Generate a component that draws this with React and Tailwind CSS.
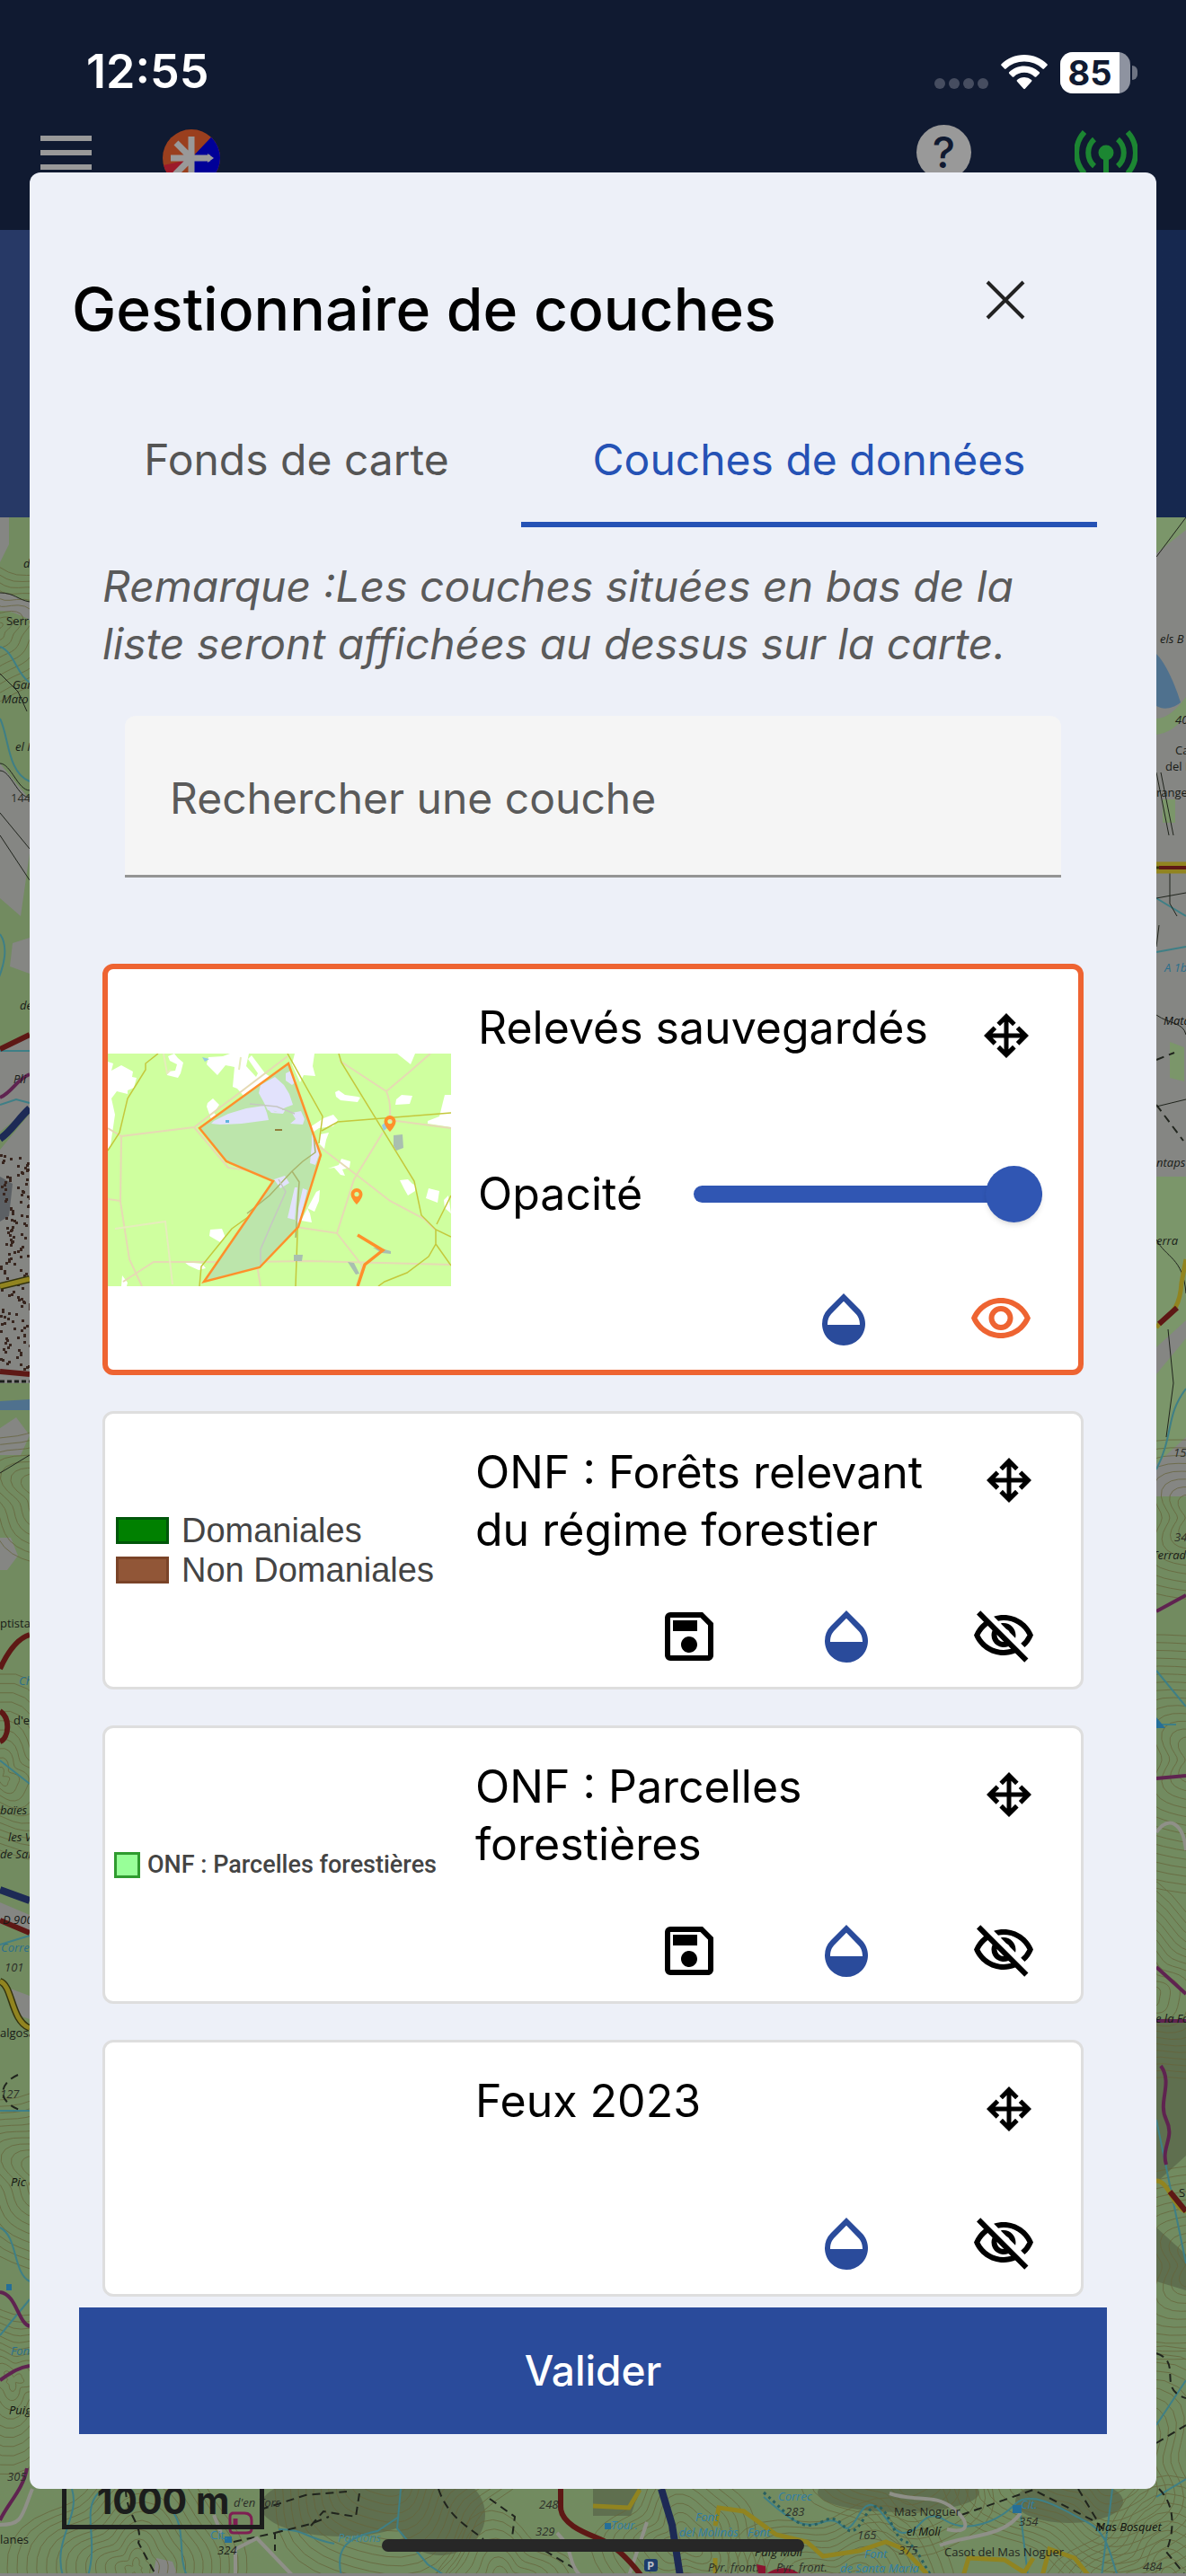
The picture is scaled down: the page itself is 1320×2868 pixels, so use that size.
// Layer manager - modal dialog shown over the map screen
import React, { useState } from 'react';
import {
  MdOutlineOpacity,
  MdOutlineSave,
  MdOutlineVisibility,
  MdOutlineVisibilityOff,
} from 'react-icons/md';

const INITIAL_LAYERS = [
  { id: 'releves', title: 'Relevés sauvegardés', legend: 'preview', visible: true, showOpacity: true },
  { id: 'forets', title: 'ONF : Forêts relevant du régime forestier', legend: 'forets', savable: true },
  { id: 'parcelles', title: 'ONF : Parcelles forestières', legend: 'parcelles', savable: true },
  { id: 'feux', title: 'Feux 2023' },
];

// ============================================================================
// ICONS
// ============================================================================
function MoveIcon() {
  return (
    <svg viewBox="0 -960 960 960" className="size-[60px]" fill="currentColor" aria-hidden="true">
      <path d="M480-80 310-250l57-57 73 73v-206H235l73 72-58 58L80-480l169-169 57 57-72 72h206v-206l-73 73-57-57 170-170 170 170-57 57-73-73v206h205l-73-72 58-58 170 170-170 170-57-57 73-73H520v205l72-73 58 58L480-80Z" />
    </svg>
  );
}

function CloseIcon() {
  return (
    <svg viewBox="0 0 60 60" className="size-[60px]" fill="none" stroke="#222" strokeWidth="4" aria-hidden="true">
      <path d="M10 10 50 50M50 10 10 50" />
    </svg>
  );
}

function WifiIcon() {
  return (
    <svg viewBox="0 0 52 40" className="h-10 w-[52px]" fill="#fff" aria-hidden="true">
      <path d="M26 0C16 0 7 4 .6 10.300a1.200 1.200 0 0 0 0 1.700l3.400 3.500a1.200 1.200 0 0 0 1.700 0C11 10.400 18.200 7.500 26 7.500s15 2.900 20.300 8a1.200 1.200 0 0 0 1.700 0l3.400-3.500a1.200 1.200 0 0 0 0-1.700C45 4 36 0 26 0Z" />
      <path d="M26 12.500c-6.500 0-12.400 2.500-16.800 6.700a1.200 1.200 0 0 0 0 1.700l3.500 3.500a1.200 1.200 0 0 0 1.700 0A16.800 16.800 0 0 1 26 19.800c4.500 0 8.500 1.700 11.600 4.600a1.200 1.200 0 0 0 1.700 0l3.500-3.500a1.200 1.200 0 0 0 0-1.700A24.200 24.200 0 0 0 26 12.500Z" />
      <path d="M26 25c-3.100 0-5.900 1.200-8 3.100a1.200 1.200 0 0 0 0 1.700l7.200 7.900a1.200 1.200 0 0 0 1.700 0l7.200-7.900a1.200 1.200 0 0 0 0-1.700A12 12 0 0 0 26 25Z" />
    </svg>
  );
}

function LogoIcon() {
  return (
    <svg viewBox="0 0 64 64" className="size-16" aria-hidden="true">
      <circle cx="32" cy="32" r="32" fill="#9a3f1e" />
      <path d="M54 8.800A32 32 0 0 1 32 64V32Z" fill="#000098" />
      <path d="M10 54A32 32 0 0 1 1 40L28 34Z" fill="#9c1a2a" />
      <g stroke="#999" strokeWidth="7" fill="none">
        <path d="M32 8v50M9 32h44M15 15l17 17-18 18" />
      </g>
      <path d="M50 27l7 5-7 5Z" fill="#999" />
    </svg>
  );
}

function SignalIcon() {
  return (
    <svg viewBox="0 0 70 64" className="h-16 w-[70px]" fill="none" stroke="#1c8632" strokeWidth="6" aria-hidden="true">
      <circle cx="35" cy="25" r="8.500" fill="#1c8632" stroke="none" />
      <path d="M35 25v39M22 10a20 20 0 0 0 0 30M48 10a20 20 0 0 1 0 30M11 2a34 34 0 0 0 0 46M59 2a34 34 0 0 1 0 46" />
    </svg>
  );
}

// ============================================================================
// MAP BACKDROP - topographic map, already dimmed by the modal
// ============================================================================
const HILLS = [
  { x: -10, y: 700, rings: 9 },
  { x: 60, y: 1660, rings: 9 },
  { x: 0, y: 1980, rings: 11 },
  { x: 60, y: 2420, rings: 12 },
  { x: 15, y: 2650, rings: 10 },
  { x: 150, y: 2860, rings: 13 },
  { x: 430, y: 2740, rings: 15 },
  { x: 560, y: 2880, rings: 8 },
  { x: 760, y: 2830, rings: 9 },
  { x: 940, y: 2890, rings: 12 },
  { x: 1010, y: 2750, rings: 10 },
  { x: 1230, y: 2750, rings: 15 },
  { x: 1300, y: 2880, rings: 12 },
  { x: 1340, y: 2520, rings: 12 },
  { x: 1270, y: 2220, rings: 13 },
  { x: 1340, y: 1960, rings: 16 },
  { x: 1340, y: 1690, rings: 10 },
];

// closed wavy ring used as a contour line
function contour(hill, ring) {
  const points = [];
  for (let i = 0; i < 48; i += 1) {
    const a = (i / 48) * Math.PI * 2;
    const r = 8 + ring * 9 + Math.sin(a * 3 + hill.x) * (3 + ring) + Math.cos(a * 5 + hill.y) * (2 + ring * 0.5);
    points.push(`${(hill.x + Math.cos(a) * r * 1.15).toFixed(1)} ${(hill.y + Math.sin(a) * r).toFixed(1)}`);
  }
  return `M${points.join('L')}Z`;
}

// scattered small blocks for the built-up area
const HOUSES = Array.from({ length: 150 }, (_, i) => ({
  x: Math.floor(Math.abs(Math.sin(i * 12.9) * 4375) % 34),
  y: Math.floor(1285 + i * 1.6),
}));

const MAP_LABELS = [
  [26, 632, 'd', '#191c18', true],
  [7, 696, 'Serre', '#191c18', false],
  [14, 767, 'Gar', '#191c18', true],
  [-8, 783, 'e Mato', '#191c18', true],
  [17, 836, 'el I', '#191c18', true],
  [12, 893, '144', '#2c2f29', false],
  [22, 1124, 'de', '#191c18', true],
  [15, 1206, 'Pli', '#191c18', true],
  [0, 1812, 'ptista', '#191c18', false],
  [21, 1876, 'Ch', '#2b6f8c', true],
  [15, 1920, "d'en", '#191c18', false],
  [0, 2020, 'baïes', '#191c18', true],
  [9, 2050, 'les V', '#191c18', true],
  [0, 2069, 'de Sar', '#191c18', true],
  [3, 2142, 'D 900', '#191c18', true],
  [1, 2173, 'Correc', '#2b6f8c', true],
  [5, 2195, '101', '#2c2f29', true],
  [0, 2268, 'algosa', '#191c18', false],
  [0, 2336, '127', '#2c2f29', true],
  [12, 2434, 'Pic d', '#10120f', true],
  [12, 2622, 'Font', '#2b6f8c', true],
  [10, 2688, 'Puig', '#10120f', true],
  [8, 2762, '305', '#2c2f29', true],
  [0, 2832, 'lanes', '#191c18', false],
  [1291, 716, 'els B', '#191c18', true],
  [1308, 806, '40', '#191c18', true],
  [1308, 840, 'Ca', '#191c18', false],
  [1297, 858, 'del P', '#191c18', false],
  [1287, 887, 'range', '#191c18', false],
  [1296, 1082, 'A 1b', '#2b6f8c', true],
  [1295, 1141, 'Mata', '#10120f', true],
  [1287, 1299, 'ntaps', '#191c18', true],
  [1287, 1386, 'erra', '#191c18', true],
  [1306, 1622, '152', '#2c2f29', true],
  [1307, 1716, '34', '#2c2f29', true],
  [1282, 1736, 'Terrad', '#191c18', true],
  [1286, 2252, 'e la Font', '#191c18', true],
  [1312, 2446, 'S', '#191c18', false],
  [260, 2791, "d'en Tors", '#2b2f29', true],
  [234, 2827, 'Cit.', '#2f7fa8', false],
  [242, 2844, '324', '#1c1f1b', true],
  [376, 2830, 'Partions', '#3f8697', true],
  [600, 2793, '248', '#2c2f29', true],
  [596, 2823, '329', '#2c2f29', true],
  [680, 2816, 'Tour.', '#2f7fa8', true],
  [774, 2807, 'Font', '#2f7fa8', true],
  [756, 2824, 'del Molinàs', '#2f7fa8', true],
  [832, 2824, 'Font', '#2f7fa8', true],
  [866, 2784, 'Correc', '#2f7fa8', true],
  [874, 2801, '283', '#2c2f29', true],
  [954, 2827, '165', '#2c2f29', true],
  [1000, 2844, '375', '#2c2f29', true],
  [995, 2801, 'Mas Noguer', '#23261f', false],
  [1009, 2823, 'el Molí', '#10120f', true],
  [1134, 2812, '354', '#2c2f29', true],
  [1136, 2793, 'Cit.', '#2f7fa8', true],
  [1219, 2818, 'Mas Bosquet', '#10120f', true],
  [1051, 2846, 'Casot del Mas Noguer', '#23261f', false],
  [962, 2848, 'Font', '#2f7fa8', true],
  [935, 2864, 'de Santa Maria', '#2f7fa8', true],
  [840, 2846, 'Puig Moll', '#10120f', true],
  [788, 2863, 'Pyr. front.', '#2c2f29', true],
  [864, 2863, 'Pyr. front.', '#2c2f29', true],
  [1272, 2862, '484', '#2c2f29', true],
];

function MapBackdrop() {
  return (
    <svg
      viewBox="0 576 1320 2292"
      preserveAspectRatio="xMidYMid slice"
      className="size-full"
      fill="none"
      aria-hidden="true"
    >
      <rect y="576" width="1320" height="2292" fill="#728b60" />

      {/* bare ground and shaded relief */}
      <g fill="#858683">
        <path d="M0 576h10v30l-10 20ZM0 660c16 0 20 8 33 10v20c-12-6-20-10-33-10ZM0 850l33 40v60l-10 70-23-20ZM0 1280l33-40v300H0ZM14 1050l19-6v40l-22-8ZM0 1170l33-16v80L0 1260ZM0 1590l18-12 15 20-10 22H0ZM0 1712h12l8 20-12 16H0ZM0 2118l33 14v18L0 2142ZM6 2212l27 10v26l-18-6ZM170 2868l4-20 18 4 6 16Z" />
        <path d="M1287 576h33v1090h-33Z" />
      </g>
      <g fill="#7b966a">
        <path d="M1287 576h33v14l-33 26ZM1287 800c12 0 22-10 33-24v20c-10 14-20 20-33 22ZM1294 890h14v26h-14ZM1302 1160l16 6v38l-16-4ZM1287 1310h33v160l-33 30ZM1287 1530l33-40v110l-33 30Z" />
      </g>
      <g fill="#545d45" opacity=".6">
        <ellipse cx="380" cy="2790" rx="90" ry="34" />
        <ellipse cx="490" cy="2800" rx="50" ry="45" />
        <ellipse cx="1000" cy="2775" rx="90" ry="22" />
        <ellipse cx="1190" cy="2785" rx="60" ry="24" />
        <path d="M1287 2250h33v150l-33 30ZM1287 2480l33 30v40l-33-10Z" />
        <path d="M660 2771h52l-10 30h-42Z" />
      </g>

      {/* contour lines */}
      <g stroke="#67643b" strokeWidth="1" opacity=".75">
        {HILLS.map((hill) =>
          Array.from({ length: hill.rings }, (_, ring) => (
            <path key={`${hill.x}-${hill.y}-${ring}`} d={contour(hill, ring)} />
          ))
        )}
      </g>

      {/* built-up area */}
      <path d="M0 1310l14 8-4 36-10 6Z" fill="#5c6064" />
      <g fill="#38261f">
        {HOUSES.map((h) => (
          <rect key={h.y} x={h.x} y={h.y} width="3" height="3" />
        ))}
      </g>

      {/* water */}
      <path d="M1287 728c10 10 20 32 27 54-10 8-20 8-27 4Z" fill="#4f718e" />
      <path d="M0 1560l33-2v12H0Z" fill="#4f718e" />
      <g stroke="#3e7f86" strokeWidth="2">
        <path d="M0 720c16 6 18 30 33 40M0 800c10 20 8 60 33 70M0 1040c10 14 4 36-2 50M0 1170h33M0 1230l18-6 15 4M0 1960l33 26M0 2165l33-10M0 2350h33M0 2480c20 10 14 50 33 60M33 2560L0 2600" />
        <path d="M1287 1000l33 20M1287 1060l33-6M1287 1636c20-40 10-60 33-90M1287 1860l33 40M1287 1920h22M1287 2360l33 160M1287 2700l33-50M1287 2780l33-20" />
        <path d="M70 2868c-12-40 20-66 10-97M110 2775c-20 20 0 50-12 93M186 2790c24 20 10 52 22 78M446 2771l-4 44 34 40 20 13M380 2868c-6-26 0-42 40-50l24-16M310 2816c30 0 30 10 62 16" />
        <path d="M850 2780c24 20 40 38 66 28s20 26 40-8 30 20 50 20 20-30 46-14 60 0 78-18 56 8 80 20 26 40 34 60M1238 2771l-12 97M1136 2800l8 68" />
      </g>
      <path d="M850 2775c30 26 40 46 66 32s24 34 46-4 30 22 44 26 20 24 30 38" stroke="#285f60" strokeWidth="3" strokeDasharray="3 4" />

      {/* paths */}
      <g stroke="#20241d" strokeWidth="2" strokeDasharray="9 6">
        <path d="M290 2794l50-16 46-4M306 2820l40-10 20-8M140 2771c0 30 20 40 14 60l20 37M346 2812l14-16 36 6 4-26M260 2830l46-10v20M488 2771c10 30 30 40 50 56M545 2782l28 20-4 30M640 2860l-50-30" />
        <path d="M1070 2800l80-28 70 36 12 12M1290 2771c20 20 16 50 8 70l22 27M1200 2771l24 40M20 2310c-22 10-24 30 4 40M1287 2620c30 10 0 40 33 50M1287 2720l33-20M1287 1230l30 40M1287 1180l20-8" />
      </g>
      <g stroke="#20241d" strokeWidth="1">
        <path d="M0 660c16 0 20 8 33 10M0 930l33 50M0 750l20 20 10 22M0 1640l33-20M1287 620l33-44M1287 1000l33-6M1302 960v46l8 14M1290 1030l-3 24M1287 1130c14 10 30 8 33 22M1287 1232l33-8M1300 1480l6 60-8 60M1287 1380c10 20 30 20 33 60" />
        <path d="M0 850c12 0 20 30 33 30M0 858c12 0 20 30 33 30M0 905l33 40M1287 860l14 70M1292 860l14 70" />
      </g>
      <g stroke="#8f9088" strokeWidth="4">
        <path d="M262 2868v-30l24-12 40 42M238 2800l8 20M990 2776c30 10 50 0 70 16s20 30-6 24M1046 2834c30-12 70-8 90-36M36 2771c-12 30-10 40-36 40M620 2820c20 20 10 30 26 48M700 2868l20-60M1287 2040c14-20 30-10 33 20" />
      </g>

      {/* secondary trails */}
      <g stroke="#5f2350" strokeWidth="4">
        <path d="M0 1222c14-6 18-20 33-26M0 2552c18 2 20 34 33 38M0 2650c12-8 20-14 33-16M30 2748c-4 24-22 40-30 58M1287 1794l33-18M1287 1980l33-3M1287 2190l33 30M1287 2250h33M1292 2300c14 20-4 40 6 60s-6 30 0 50" />
      </g>
      <path d="M258 2798h14q8 0 8 8v10q0 4-6 4h-14q-4 0-4-4v-14q0-4 4-4Z" stroke="#7e1f52" strokeWidth="3" />
      <path d="M262 2804v8" stroke="#7e1f52" strokeWidth="5" />

      {/* main roads */}
      <g stroke="#33330f" strokeWidth="8">
        <path d="M0 1432l33-8M0 2206c14 4 12 44 33 52M1287 966h33" />
      </g>
      <g stroke="#918420" strokeWidth="5">
        <path d="M0 1432l33-8M0 2206c14 4 12 44 33 52M1287 962h33M1287 970h33M1287 1478c10-14 26-14 28-50l5-26M1287 2428c14 0 18 30 33 34" />
        <path d="M796 2812l4-20 28 4 36 26 34 8 18 16 40-6 30-10 20 8 26 28M660 2790l40 2 12-20M1072 2868l6-20 40 2 22 14 10-16M1160 2868l8-30 28 10 16 20M796 2868v-20" />
      </g>
      <g stroke="#5e1815" strokeWidth="6">
        <path d="M0 1168l33-16M0 1527l33 3M0 1858c10-22 20-34 33-38M0 1905c12 8 10 30 0 34M0 2138l33 14M1290 1474l20-18M1302 2440l18 22" />
        <path d="M624 2771v20c0 20 30 30 44 36s30 20 46 41" />
      </g>
      <path d="M1290 966h30" stroke="#5e1815" strokeWidth="4" />
      <path d="M0 1538h33" stroke="#1c1f1b" strokeWidth="3" strokeDasharray="5 3" />
      <g stroke="#1d2a55" strokeWidth="8">
        <path d="M0 1268c12-8 20-22 33-34M0 2104l33 12M736 2771l12 40 9 57" />
      </g>

      {/* points of interest */}
      <g fill="#256f98">
        <rect x="250" y="2824" width="8" height="7" />
        <rect x="673" y="2809" width="7" height="7" />
        <rect x="1127" y="2789" width="10" height="9" />
        <rect x="7" y="2543" width="6" height="7" />
        <path d="M1287 1912l10 12h-10Z" />
      </g>
      <path d="M842 2855l10 2v9h-8ZM852 2866c14-10 30-8 38 0Z" fill="#8a1430" />
      <rect x="717" y="2849" width="15" height="14" rx="3" fill="#1d3c6b" />
      <text x="720" y="2861" fontSize="13" fontWeight="700" fill="#b8bcc4" fontFamily="Open Sans, sans-serif">P</text>

      <g fontFamily="Open Sans, sans-serif" fontSize="13" fontWeight="500">
        {MAP_LABELS.map(([x, y, text, color, italic]) => (
          <text key={`${x}-${y}`} x={x} y={y} fill={color} fontStyle={italic ? 'italic' : 'normal'}>
            {text}
          </text>
        ))}
      </g>
      <rect y="2865" width="1320" height="3" fill="#858585" />
    </svg>
  );
}

// ============================================================================
// SCREEN BEHIND THE DIALOG
// ============================================================================
function StatusBar() {
  return (
    <div className="flex h-[104px] items-end justify-between pr-[54px] pl-24">
      <span className="text-[52px] leading-[48px] font-semibold text-white">12:55</span>
      <div className="flex items-center">
        <div className="mr-3.5 flex gap-1 pt-6">
          <span className="h-3 w-3 rounded-full bg-[#464d60]" />
          <span className="h-3 w-3 rounded-full bg-[#464d60]" />
          <span className="h-3 w-3 rounded-full bg-[#464d60]" />
          <span className="h-3 w-3 rounded-full bg-[#464d60]" />
        </div>
        <WifiIcon />
        <div className="ml-3.5 flex h-[46px] w-[78px] items-center overflow-hidden rounded-[14px] bg-[#8e93a0]">
          <span className="flex h-full w-[66px] items-center justify-center bg-white text-[38px] leading-none font-bold text-[#101a31]">
            85
          </span>
        </div>
        <span className="ml-0.5 h-4 w-1.5 rounded-r-full bg-[#6d7382]" />
      </div>
    </div>
  );
}

function Toolbar() {
  return (
    <div className="flex h-[152px] items-start pt-[35px] pr-[54px] pl-[45px]">
      <button type="button" aria-label="Menu" className="mt-3 flex w-[57px] flex-col gap-2.5">
        <span className="h-1.5 w-full bg-[#999]" />
        <span className="h-1.5 w-full bg-[#999]" />
        <span className="h-1.5 w-full bg-[#999]" />
      </button>
      <div className="mt-[5px] ml-[79px]">
        <LogoIcon />
      </div>
      <button
        type="button"
        className="ml-auto flex size-[61px] items-center justify-center rounded-full bg-[#999] text-[48px] leading-none font-medium text-[#101a31]"
      >
        ?
      </button>
      <div className="mt-1.5 ml-[115px]">
        <SignalIcon />
      </div>
    </div>
  );
}

function Backdrop() {
  return (
    <div className="absolute inset-0 flex flex-col">
      <div className="bg-[#101a31]">
        <StatusBar />
        <Toolbar />
      </div>
      <div className="h-80 bg-linear-to-r from-[#273966] from-5% to-[#16284f] to-95%" />
      <div className="relative min-h-0 flex-1">
        <MapBackdrop />
        <div className="absolute bottom-[52px] left-[69px] h-[72px] w-[225px] border-5 border-t-0 border-[#1b1d1c] pt-4 text-center text-[41px] leading-12 font-bold text-[#1b1d1c]">
          1000 m
        </div>
        <div className="absolute inset-x-0 bottom-[27px] mx-auto h-3.5 w-[470px] rounded-full bg-[#272727]" />
      </div>
    </div>
  );
}

// ============================================================================
// LAYER LEGENDS
// ============================================================================
function PreviewLegend() {
  return (
    <svg viewBox="0 0 382 259" className="w-full" fill="none" role="img" aria-label="Aperçu des relevés">
      <rect width="382" height="259" fill="#cfff9f" />
      <g fill="#fff">
        <path d="M0 9l6 2-2 8 11-6 13 7-1 6 5 1-3 11-7 3v4l-12-3-6 8 4 18-5 34-3 4Z" />
        <path d="M67 3l7-3 4 5 6 5-3 12-3 5-12-3v-4l9-1 2-7-8-4ZM110 12l2-8 16-1 8-3h21l-3 14 11 12 2-4-11-16 4-4 15 20 6 4-29 22-8-9-5-2 2-22-10-2-9 11Z" />
        <path d="M208 0h22l-2 14 3 11-13-1-4 8-9-20ZM322 0h20l-5 12-10-8ZM111 55l6-5 7 7-6 9 3 3-6 4-5-14Z" />
        <path d="M253 43l4-2 7 5 14 2 3 1-3 5-19-2-5-4ZM321 51l6-5 12 1-3 9-16 1ZM375 46h7v36l-26-4v-3l13-5ZM240 72l11-4 5 6-5 7-16 2-9 6-1-7ZM236 90l10-2-3 8-2 10-6-6ZM245 128l12-4 3-7 10 3-1 7-8 2 3 7-5-1-7-8-7 1ZM325 141l9-1 5 5 4 2-1 6-8 5-4-7ZM357 150l12 3-2 13-13-5ZM374 163l5-5 3 20-7-6ZM232 154l4-2-1 12-5 12-8-4 3 6 2 10-12-2ZM114 196l13-1 4 10-6 5-12-7ZM85 232l20 2 4 5-8 2-11-5ZM16 247l6 8-1 4h-6Z" />
      </g>
      <g stroke="#e6dab4" strokeWidth="2">
        <path d="M200 3L96 82 15 92 14 165l10 64 14 30M0 83l15 9M0 162l14 2M96 82l38 45 52 7 12 22-16 34-16 45 4 24M258 8l52 34 25-21 24-21M310 42c8 20 2 30 4 32l68 9M306 88l-32 52-19 60-66-10M255 200l28 36-4 23M236 104l42 32 36 28 38 20 12 12M17 254l34-22h100l74-1 157 4" />
        <path d="M8 195l56-8 8 70M62 0l4 22 4-4M148 4l-2 14" stroke="#e6ecbc" />
      </g>
      <g stroke="#c4c83c" strokeWidth="1.500">
        <path d="M56 0L42 11v7L22 50l-9 38-13 20M200 0l39 70-4 30M257 0l3 10 81 132 8 38 16 16 17 8M238 86l18-10 126-10M365 196v16l-8 14-24 18-25 10-7 5M382 158l-16 32M365 212l17 24M102 259l2-22 34-42 50-36 25-24 18-14M205 131l8 12-4 116" />
      </g>
      <g fill="#a9bfb0">
        <path d="M318 91l10-1 1 15-8 3-3-5ZM207 224h10l-1 7h-9ZM267 232l7 1 6 12-4 1ZM295 216l10 1 10 3v3l-10-1Z" />
      </g>
      <path d="M105 4l8 2-5 3ZM305 80l4-4 3 6-5 4Z" fill="#94cbe4" />

      <path d="M201 11 102 83l30 37 52 22-77 112 62-16 43-45 25-80Z" fill="#bce5ab" />
      <g fill="#e2e2fc">
        <path d="M170 35l16-9 10 9 6 10 4 12-8 3-4 2v5l-8-3-8-1-5-10-5-9ZM118 75l16-8 20-6 20-3 3 8 2 8-30 4-24 1-10-1ZM198 22l6-3 6 12-5 4-7-5ZM178 62l10 3 10-3-3 5-13-1ZM205 66l10-2 4 9-2 6-14-1 6-5ZM227 90l5 10 4 10-5 14-6-2 2-20ZM185 140l12-4 5 8-10 6ZM208 149h3l-3 36-8-2ZM217 150l5 2-9 38-4-4Z" />
      </g>
      <g stroke="#a9b56c" strokeWidth="1.500">
        <path d="M155 178l25-20 25-27 12-11 14-10-2-20M205 131l8 12-4 62" />
        <path d="M182 190l-12 28v20M182 190l16-36-8-14M158 56l30 3 20 8" stroke="#c6c7c2" />
      </g>
      <path d="M131 74h4v3h-4Z" fill="#5fb4de" />
      <path d="M186 85h8" stroke="#927f3c" strokeWidth="2" />
      <path d="M201 11 102 83l30 37 52 22-77 112 62-16 43-45 25-80Z" stroke="#ff902b" strokeWidth="2.500" />
      <path d="M278 202l28 17-20 16-8 24" stroke="#ff902b" strokeWidth="3.500" />
      <g fill="#ff902b" fillRule="evenodd">
        <path id="pin" d="M314 69a6.500 6.500 0 0 0-6.500 6.500c0 5 6.500 11.500 6.500 11.500s6.500-6.500 6.500-11.500A6.500 6.500 0 0 0 314 69Zm0 4a2.600 2.600 0 1 1 0 5.200 2.600 2.600 0 0 1 0-5.200Z" />
        <use href="#pin" x="-37" y="81" />
      </g>
    </svg>
  );
}

function ForetsLegend() {
  return (
    <ul className="flex w-full flex-col gap-3 pl-3 font-['Liberation_Sans'] text-[38px] leading-8 text-[#444]">
      <li className="flex items-center gap-3.5">
        <span className="h-[30px] w-[59px] border-3 border-[#00560a] bg-[#008000]" />
        Domaniales
      </li>
      <li className="flex items-center gap-3.5">
        <span className="h-[30px] w-[59px] border-3 border-[#7a4328] bg-[#915637]" />
        Non Domaniales
      </li>
    </ul>
  );
}

function ParcellesLegend() {
  return (
    <div className="flex w-full items-center gap-2 pl-2.5 font-[Roboto] text-[27px] leading-8 font-medium whitespace-nowrap text-[#444]">
      <span className="size-[29px] shrink-0 border-3 border-[#2f9b2f] bg-[#98ff98]" />
      ONF : Parcelles forestières
    </div>
  );
}

// ============================================================================
// LAYER CARD
// ============================================================================
function LayerCard({ layer, onToggle }) {
  const [opacity, setOpacity] = useState(100);
  const EyeIcon = layer.visible ? MdOutlineVisibility : MdOutlineVisibilityOff;

  return (
    <li
      className={`flex rounded-xl bg-white ${
        layer.visible ? 'border-6 border-[#ee6432]' : 'border-3 border-[#dedede]'
      } ${layer.savable ? 'min-h-[310px]' : 'min-h-[286px]'}`}
    >
      <div className="flex w-[382px] shrink-0 items-center">
        {layer.legend === 'preview' && <PreviewLegend />}
        {layer.legend === 'forets' && <ForetsLegend />}
        {layer.legend === 'parcelles' && <ParcellesLegend />}
      </div>

      <div className="flex min-w-0 flex-1 flex-col pt-[33px] pr-[50px] pb-5 pl-[30px]">
        <div className="flex items-start justify-between">
          <h2 className="max-w-[530px] text-[50px] leading-16">{layer.title}</h2>
          <button type="button" aria-label="Déplacer" className="mt-[11px]">
            <MoveIcon />
          </button>
        </div>

        {layer.showOpacity && (
          <div className="mt-[114px] mb-[72px] flex h-16 items-center justify-between">
            <label htmlFor={`opacity-${layer.id}`} className="text-[50px] leading-16">
              Opacité
            </label>
            <input
              id={`opacity-${layer.id}`}
              type="range"
              min="0"
              max="100"
              value={opacity}
              onChange={(e) => setOpacity(Number(e.target.value))}
              className="-mr-2.5 h-16 w-[388px] appearance-none bg-transparent [&::-webkit-slider-runnable-track]:h-[19px] [&::-webkit-slider-runnable-track]:rounded-full [&::-webkit-slider-runnable-track]:bg-[#3056b3] [&::-webkit-slider-thumb]:-mt-[22px] [&::-webkit-slider-thumb]:size-[63px] [&::-webkit-slider-thumb]:appearance-none [&::-webkit-slider-thumb]:rounded-full [&::-webkit-slider-thumb]:bg-[#3056b3] [&::-webkit-slider-thumb]:shadow-md"
            />
          </div>
        )}

        <div className="mt-auto flex justify-end gap-[103px]">
          {layer.savable && (
            <button type="button" aria-label="Enregistrer">
              <MdOutlineSave className="size-[72px]" />
            </button>
          )}
          <button type="button" aria-label="Opacité" className="text-[#2a4b9b]">
            <MdOutlineOpacity className="size-[72px]" />
          </button>
          <button
            type="button"
            aria-label="Visibilité"
            onClick={() => onToggle(layer.id)}
            className={layer.visible ? 'text-[#ee6432]' : 'text-black'}
          >
            <EyeIcon className="size-[72px]" />
          </button>
        </div>
      </div>
    </li>
  );
}

// ============================================================================
// MAIN APP
// ============================================================================
function App() {
  const [layers, setLayers] = useState(INITIAL_LAYERS);
  const [search, setSearch] = useState('');

  const toggleLayer = (id) => {
    setLayers(layers.map((l) => (l.id === id ? { ...l, visible: !l.visible } : l)));
  };

  const shown = layers.filter((l) => l.title.toLowerCase().includes(search.toLowerCase()));

  return (
    <div className="relative flex min-h-screen flex-col overflow-hidden px-[33px] pt-48 pb-[97px] font-[Inter,sans-serif] text-black">
      <Backdrop />

      <main role="dialog" aria-labelledby="dialog-title" className="relative flex flex-1 flex-col rounded-xl bg-[#edf0f8]">
        <header className="flex items-start justify-between pt-28 pr-[138px] pl-[47px]">
          <h1 id="dialog-title" className="text-[66px] leading-20 font-medium">
            Gestionnaire de couches
          </h1>
          <button type="button" aria-label="Fermer">
            <CloseIcon />
          </button>
        </header>

        <div role="tablist" className="mt-[59px] mr-[66px] ml-[47px] flex">
          <button role="tab" aria-selected="false" className="h-36 grow border-b-6 border-transparent text-[48px] text-[#555]">
            Fonds de carte
          </button>
          <button role="tab" aria-selected="true" className="h-36 w-[641px] border-b-6 border-[#2552b5] text-[48px] text-[#2552b5]">
            Couches de données
          </button>
        </div>

        <div className="px-[81px]">
          <p className="mt-[34px] text-[48px] leading-16 text-[#5a5a5a] italic">
            Remarque :Les couches situées en bas de la liste seront affichées au dessus sur la carte.
          </p>

          <div className="mx-[25px] mt-12">
            <input
              type="text"
              aria-label="Rechercher une couche"
              placeholder="Rechercher une couche"
              value={search}
              onChange={(e) => setSearch(e.target.value)}
              className="h-[180px] w-full rounded-t-xl border-b-3 border-[#949494] bg-[#f5f5f5] px-[50px] pt-1.5 text-[48px] placeholder:text-[#5a5a5a]"
            />
          </div>

          <ul className="mt-24 flex flex-col gap-10">
            {shown.map((layer) => (
              <LayerCard key={layer.id} layer={layer} onToggle={toggleLayer} />
            ))}
          </ul>
        </div>

        <div className="mt-auto px-[55px] pb-[61px]">
          <button type="button" className="h-[141px] w-full bg-[#2a4b9b] text-[46px] font-medium text-white">
            Valider
          </button>
        </div>
      </main>
    </div>
  );
}

export default App;
